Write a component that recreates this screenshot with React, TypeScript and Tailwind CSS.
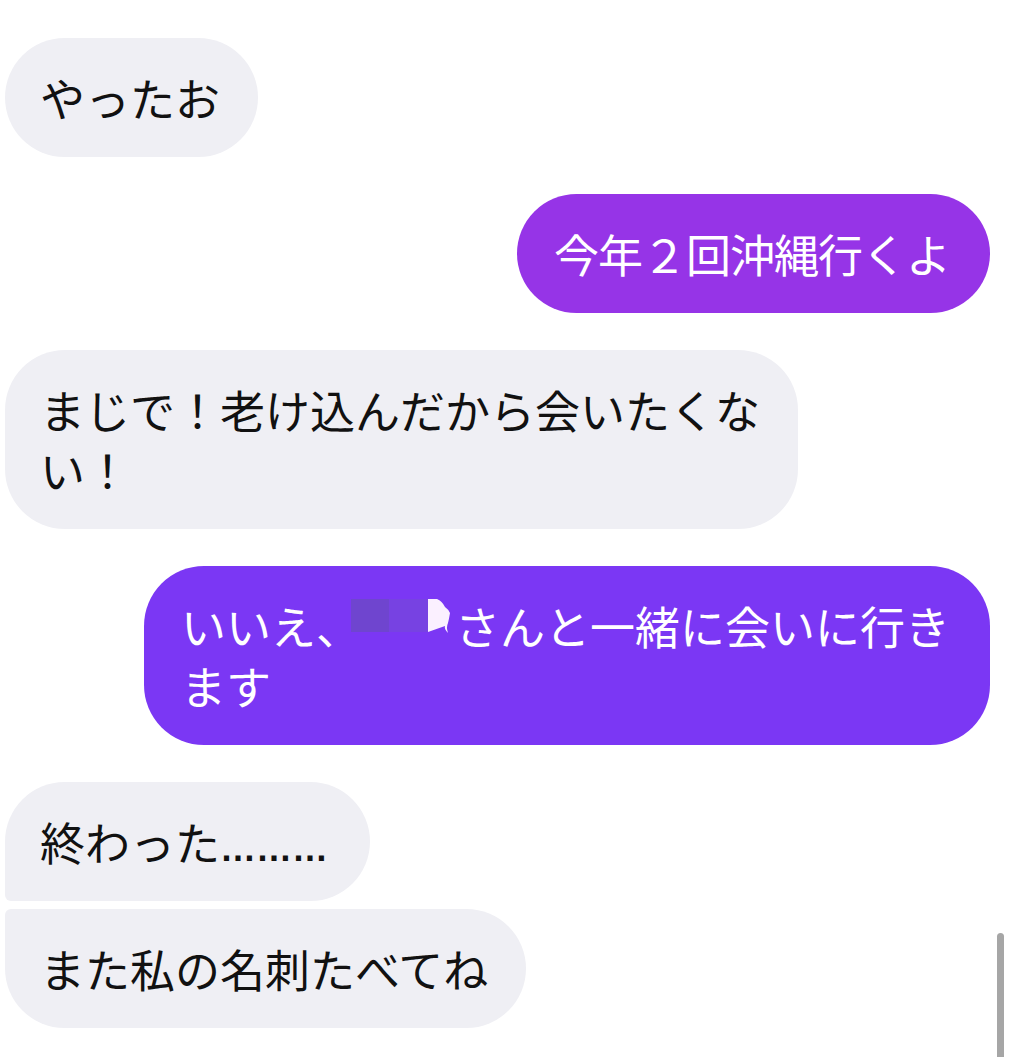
const font = { fontFamily: '"Noto Sans CJK JP", "Noto Sans", sans-serif' };

function Received({ children, className = "" }: { children: React.ReactNode; className?: string }) {
    return (
        <div className={"self-start bg-[#efeff4] text-[#111111] text-[45px] leading-[60px] pl-[35px] pr-[38px] pt-[30px] pb-[29px] " + className}>
            {children}
        </div>
    );
}

function Sent({ children, className = "" }: { children: React.ReactNode; className?: string }) {
    return (
        <div className={"self-end text-white text-[45px] leading-[60px] pl-[37px] pr-[40px] pt-[30px] pb-[29px] rounded-[60px] " + className}>
            {children}
        </div>
    );
}

// pixelated name, blurred out in the original
function HiddenName() {
    return (
        <span className="inline-flex items-start align-[13px] h-[40px] ml-[-10px] mr-[2px]">
            <span className="w-[38px] h-[33px] bg-[#6f45cf]"></span>
            <span className="w-[39px] h-[33px] bg-[#7742e2]"></span>
            <svg width="25" height="40" viewBox="0 0 25 40">
                <path d="M0 0 L9 0 Q14 2 17 8 Q20 10 22 14 Q21 20 20 24 Q18 28 20 34 Q16 30 17 27 L0 33 Z" fill="#fbf0ff" />
            </svg>
        </span>
    );
}

export default function App() {
    return (
        <div className="relative w-[1015px] h-[1057px] bg-white overflow-hidden" style={font}>
            <div className="flex flex-col pt-[38px] pl-[5px] pr-[25px]">
                <Received className="rounded-[60px]">やったお</Received>

                <Sent className="mt-[37px] bg-[#9634e7] tracking-[-1px]">今年２回沖縄行くよ</Sent>

                <Received className="mt-[37px] rounded-[60px]">
                    まじで！老け込んだから会いたくな<br />い！
                </Received>

                <Sent className="mt-[37px] bg-[#7b37f4]">
                    いいえ、<HiddenName />さんと一緒に会いに行き<br />ます
                </Sent>

                <Received className="mt-[37px] rounded-[60px] rounded-bl-[6px] pr-[42px] pb-[28px]">
                    終わった<span className="text-[36px] leading-[20px] font-bold font-['Liberation_Sans']">………</span>
                </Received>
                <Received className="mt-[8px] rounded-[60px] rounded-tl-[6px]">また私の名刺たべてね</Received>
            </div>

            {/* scroll indicator */}
            <div className="absolute left-[997px] top-[933px] w-[7px] h-[140px] rounded-full bg-[#a6a6a6]"></div>
        </div>
    );
}
